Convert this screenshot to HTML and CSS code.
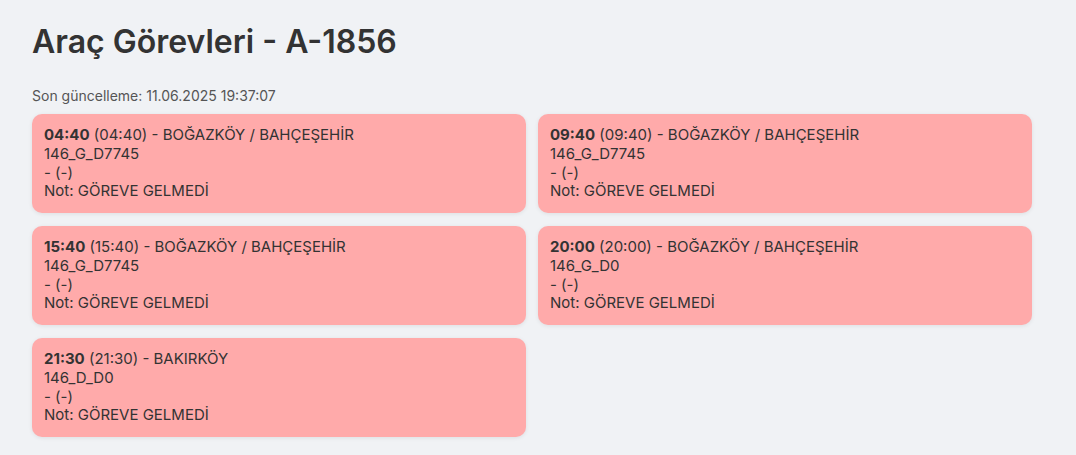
FILE: index.html
```html
<!DOCTYPE html>
<html lang="tr">
<head>
<meta charset="utf-8">
<title>Araç Görevleri - A-1856</title>
<link rel="stylesheet" href="styles.css">
</head>
<body>
<div class="page">
  <h1 class="title">Araç Görevleri - A-1856</h1>
  <div class="updated">Son güncelleme: 11.06.2025 19:37:07</div>
  <div class="grid">
    <div class="card">
      <div><b>04:40</b> (04:40) - BOĞAZKÖY / BAHÇEŞEHİR</div>
      <div>146_G_D7745</div>
      <div>- (-)</div>
      <div>Not: GÖREVE GELMEDİ</div>
    </div>
    <div class="card">
      <div><b>09:40</b> (09:40) - BOĞAZKÖY / BAHÇEŞEHİR</div>
      <div>146_G_D7745</div>
      <div>- (-)</div>
      <div>Not: GÖREVE GELMEDİ</div>
    </div>
    <div class="card">
      <div><b>15:40</b> (15:40) - BOĞAZKÖY / BAHÇEŞEHİR</div>
      <div>146_G_D7745</div>
      <div>- (-)</div>
      <div>Not: GÖREVE GELMEDİ</div>
    </div>
    <div class="card">
      <div><b>20:00</b> (20:00) - BOĞAZKÖY / BAHÇEŞEHİR</div>
      <div>146_G_D0</div>
      <div>- (-)</div>
      <div>Not: GÖREVE GELMEDİ</div>
    </div>
    <div class="card">
      <div><b>21:30</b> (21:30) - BAKIRKÖY</div>
      <div>146_D_D0</div>
      <div>- (-)</div>
      <div>Not: GÖREVE GELMEDİ</div>
    </div>
  </div>
</div>
</body>
</html>
```
FILE: styles.css
```css
html, body {
  margin: 0;
  padding: 0;
  background: #f0f2f5;
}
body {
  font-family: Inter, "Noto Sans", sans-serif;
  color: #333;
}
.page {
  padding: 22px 32px 20px;
  width: 1000px;
}
.title {
  margin: 0;
  font-size: 32px;
  font-weight: 600;
  line-height: 39px;
  color: #333;
}
.updated {
  margin-top: 26px;
  font-size: 14px;
  line-height: 17px;
  color: #555;
}
.grid {
  margin-top: 10px;
  display: grid;
  grid-template-columns: 494px 494px;
  column-gap: 12px;
  row-gap: 13px;
}
.card {
  background: #ffaaaa;
  border-radius: 10px;
  padding: 12px;
  font-size: 15px;
  line-height: 18.75px;
  box-shadow: 0 1px 4px rgba(0, 0, 0, 0.08);
}
.card b {
  font-weight: 700;
}
```
